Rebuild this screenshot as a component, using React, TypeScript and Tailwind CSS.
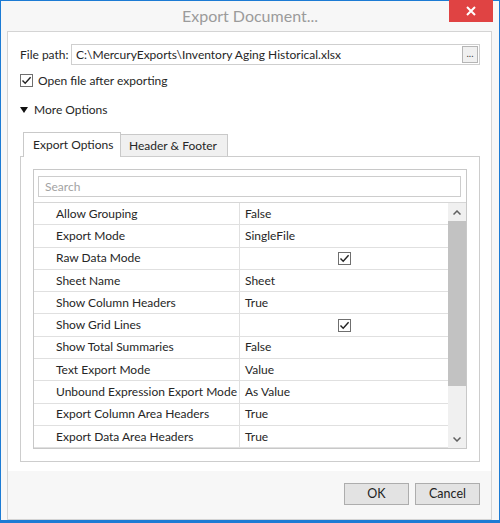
import { ReactNode } from "react";

type Row = { label: string; value?: string; check?: boolean };

const rows: Row[] = [
  { label: "Allow Grouping", value: "False" },
  { label: "Export Mode", value: "SingleFile" },
  { label: "Raw Data Mode", check: true },
  { label: "Sheet Name", value: "Sheet" },
  { label: "Show Column Headers", value: "True" },
  { label: "Show Grid Lines", check: true },
  { label: "Show Total Summaries", value: "False" },
  { label: "Text Export Mode", value: "Value" },
  { label: "Unbound Expression Export Mode", value: "As Value" },
  { label: "Export Column Area Headers", value: "True" },
  { label: "Export Data Area Headers", value: "True" },
];

function CheckBox({ className }: { className?: string }) {
  return (
    <span
      className={
        "flex h-[13px] w-[13px] shrink-0 items-center justify-center border border-[#6f6f6f] bg-white " +
        (className ?? "")
      }
    >
      <svg width="11" height="11" viewBox="0 0 11 11">
        <path d="M1.5 5.5 L4.2 8.3 L9.6 2.2" fill="none" stroke="#222" strokeWidth="1.4" />
      </svg>
    </span>
  );
}

function Button({ children }: { children: ReactNode }) {
  return (
    <button className="h-[22px] w-[65px] border border-[#adadad] bg-[#e3e3e3] text-[12.5px] text-[#222]">
      {children}
    </button>
  );
}

export default function App() {
  return (
    <div
      className="flex h-[523px] w-[500px] flex-col whitespace-nowrap border-x border-t border-b-[3px] border-[#1c7bd4] bg-[#f7f7f7] text-[12px] text-[#262626]"
      style={{ fontFamily: 'Lato, "Open Sans", sans-serif' }}
    >
      {/* title bar */}
      <div className="relative flex h-[30px] shrink-0 items-center justify-center">
        <span className="text-[16px] text-[#9b9b9b]">Export Document...</span>
        <div className="absolute right-[6px] top-[-1px] flex h-[22px] w-[44px] items-center justify-center bg-[#e04343]">
          <svg width="10" height="10" viewBox="0 0 10 10">
            <path d="M1 1 L9 9 M9 1 L1 9" stroke="#fff" strokeWidth="2" />
          </svg>
        </div>
      </div>

      <div className="ml-[6px] mr-[7px] flex flex-1 flex-col border border-[#d4d4d4]">
        <div className="flex flex-col bg-white pl-[12px] pr-[11px] pt-[12px]">
          {/* file path */}
          <div className="flex h-[21px] items-center">
            <span className="w-[51px]">File path:</span>
            <div className="flex h-[21px] flex-1 items-center border border-[#cfcfcf] pl-[4px] pr-[1px]">
              <span className="flex-1">C:\MercuryExports\Inventory Aging Historical.xlsx</span>
              <span className="flex h-[17px] w-[16px] items-center justify-center border border-[#b5b5b5] bg-[#f0f0f0] pb-[3px] text-[10px] text-[#444]">
                ...
              </span>
            </div>
          </div>

          <div className="mt-[9px] flex h-[13px] items-center gap-[5px]">
            <CheckBox />
            <span>Open file after exporting</span>
          </div>

          <div className="mt-[15px] flex h-[16px] items-center gap-[6px]">
            <svg width="8" height="6" viewBox="0 0 8 6">
              <path d="M0 0 L8 0 L4 6 Z" fill="#111" />
            </svg>
            <span>More Options</span>
          </div>

          {/* tabs */}
          <div className="mt-[14px] flex items-end pl-[3px]">
            <div className="relative z-10 -mb-px flex h-[25px] w-[98px] items-center border border-b-0 border-[#c9c9c9] bg-white pl-[9px]">
              Export Options
            </div>
            <div className="flex h-[22px] w-[107px] items-center border border-b-0 border-l-0 border-[#c9c9c9] bg-[#f0f0f0] pl-[8px]">
              Header &amp; Footer
            </div>
          </div>

          <div className="h-[306px] border border-[#cdcdcd] p-[12px]">
            <div className="flex h-full flex-col border border-[#c8c8c8]">
              <div className="flex h-[33px] shrink-0 items-start border-b border-[#d6d6d6] pl-[4px] pr-[5px] pt-[6px]">
                <div className="flex h-[21px] flex-1 items-center border border-[#cdcdcd] pl-[6px] text-[#a3a3a3]">
                  Search
                </div>
              </div>

              <div className="flex min-h-0 flex-1">
                <div className="flex flex-1 flex-col overflow-hidden">
                  {rows.map((r) => (
                    <div key={r.label} className="flex h-[22.3px] shrink-0 border-b border-[#e0e0e0]">
                      <div className="flex w-[206px] items-center border-r border-[#e0e0e0] pl-[22px]">
                        {r.label}
                      </div>
                      <div className="flex flex-1 items-center pl-[5px]">
                        {r.check ? <CheckBox className="mx-auto -translate-x-[2px]" /> : r.value}
                      </div>
                    </div>
                  ))}
                </div>

                {/* scrollbar */}
                <div className="flex w-[18px] shrink-0 flex-col bg-[#f0f0f0]">
                  <div className="flex h-[18px] items-center justify-center">
                    <svg width="8" height="5" viewBox="0 0 8 5">
                      <path d="M0.5 4.5 L4 1 L7.5 4.5" fill="none" stroke="#606060" strokeWidth="1.5" />
                    </svg>
                  </div>
                  <div className="h-[165px] bg-[#c2c2c2]" />
                  <div className="flex-1" />
                  <div className="flex h-[18px] items-center justify-center">
                    <svg width="8" height="5" viewBox="0 0 8 5">
                      <path d="M0.5 0.5 L4 4 L7.5 0.5" fill="none" stroke="#606060" strokeWidth="1.5" />
                    </svg>
                  </div>
                </div>
              </div>
            </div>
          </div>
          <div className="h-[9px]" />
        </div>

        {/* buttons */}
        <div className="flex flex-1 items-start justify-end gap-[6px] pr-[11px] pt-[12px]">
          <Button>OK</Button>
          <Button>Cancel</Button>
        </div>
      </div>
    </div>
  );
}
